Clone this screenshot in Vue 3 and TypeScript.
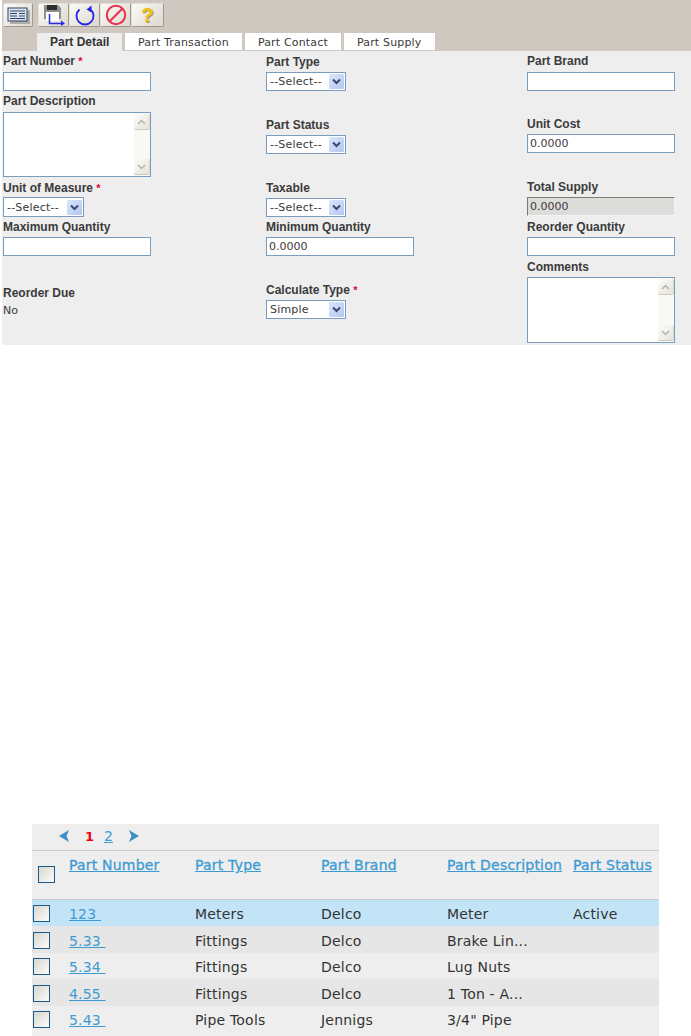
<script setup lang="ts">
interface Row { num: string; type: string; brand: string; desc: string; status: string }
const rows: Row[] = [
  { num: '123', type: 'Meters', brand: 'Delco', desc: 'Meter', status: 'Active' },
  { num: '5.33', type: 'Fittings', brand: 'Delco', desc: 'Brake Lin...', status: '' },
  { num: '5.34', type: 'Fittings', brand: 'Delco', desc: 'Lug Nuts', status: '' },
  { num: '4.55', type: 'Fittings', brand: 'Delco', desc: '1 Ton - A...', status: '' },
  { num: '5.43', type: 'Pipe Tools', brand: 'Jennigs', desc: '3/4" Pipe', status: '' },
]
const headers = ['Part Number', 'Part Type', 'Part Brand', 'Part Description', 'Part Status']
const tabs = ['Part Transaction', 'Part Contact', 'Part Supply']
</script>

<template>
  <div class="page">
    <header class="topbar">
      <div class="toolbar">
        <button class="tool t1" type="button" aria-label="List">
          <svg width="23" height="17" viewBox="0 0 23 17">
            <rect x="3" y="3" width="20" height="14" fill="#777" opacity=".5" />
            <rect x="1" y="1" width="19" height="13" fill="#dbe6f7" stroke="#33415f" />
            <path d="M3 4h15M3 6.500h7M12 6.500h6M3 9h7M12 9h6M3 11.500h15" stroke="#33415f" fill="none" />
          </svg>
        </button>
        <button class="tool t2" type="button" aria-label="Save">
          <svg width="24" height="22" viewBox="0 0 24 22">
            <path d="M2 1h14l3 3v11H2z" fill="#8f8f8f" />
            <rect x="5" y="1" width="10" height="5" fill="#2e2e2e" />
            <rect x="4" y="8" width="13" height="9" fill="#fff" />
            <path d="M7.500 10v9.500H20" fill="none" stroke="#2a2ae0" stroke-width="1.500" />
            <path d="M19 16.500l4 3-4 2.500z" fill="#2a2ae0" />
          </svg>
        </button>
        <button class="tool" type="button" aria-label="Undo">
          <svg width="22" height="22" viewBox="0 0 22 22">
            <path d="M5.500 5.500a8.500 8.500 0 1 0 11 0" fill="none" stroke="#2222e8" stroke-width="1.800" />
            <path d="M17.500 1.500v7l-5-3z" fill="#2222e8" />
          </svg>
        </button>
        <button class="tool" type="button" aria-label="Cancel">
          <svg width="22" height="22" viewBox="0 0 22 22">
            <circle cx="11" cy="11" r="9.200" fill="none" stroke="#e8304f" stroke-width="2" />
            <path d="M5 17L17 5" stroke="#e8304f" stroke-width="2" />
          </svg>
        </button>
        <button class="tool t5" type="button" aria-label="Help">?</button>
      </div>
      <nav class="tabs">
        <span class="tab active">Part Detail</span>
        <span v-for="t in tabs" :key="t" class="tab">{{ t }}</span>
      </nav>
    </header>

    <form class="form">
      <div class="col col1">
        <div class="field g4"><label>Part Number <b class="req">*</b></label><div class="box input"></div></div>
        <div class="field g4 m3"><label>Part Description</label>
          <div class="box area a65">
            <div class="scroll">
              <span class="sbtn"><svg width="9" height="6" viewBox="0 0 9 6"><path d="M1 5l3.500-3.500L8 5" fill="none" stroke="#b5b5ac" stroke-width="1.500" /></svg></span>
              <span class="sbtn"><svg width="9" height="6" viewBox="0 0 9 6"><path d="M1 1l3.500 3.500L8 1" fill="none" stroke="#b5b5ac" stroke-width="1.500" /></svg></span>
            </div>
          </div>
        </div>
        <div class="field m4 g2"><label>Unit of Measure <b class="req">*</b></label>
          <div class="box select s81"><span class="val sel-val">--Select--</span><span class="arrow"><svg width="9" height="7" viewBox="0 0 9 7"><path d="M1 1.500l3.500 3.500L8 1.500" fill="none" stroke="#3c4a70" stroke-width="2" /></svg></span></div>
        </div>
        <div class="field m3"><label>Maximum Quantity</label><div class="box input"></div></div>
        <div class="field m30 g4"><label>Reorder Due</label><div class="plain">No</div></div>
      </div>

      <div class="col col2">
        <div class="field c2top"><label>Part Type</label>
          <div class="box select"><span class="val sel-val">--Select--</span><span class="arrow"><svg width="9" height="7" viewBox="0 0 9 7"><path d="M1 1.500l3.500 3.500L8 1.500" fill="none" stroke="#3c4a70" stroke-width="2" /></svg></span></div>
        </div>
        <div class="field m27"><label>Part Status</label>
          <div class="box select"><span class="val sel-val">--Select--</span><span class="arrow"><svg width="9" height="7" viewBox="0 0 9 7"><path d="M1 1.500l3.500 3.500L8 1.500" fill="none" stroke="#3c4a70" stroke-width="2" /></svg></span></div>
        </div>
        <div class="field m27"><label>Taxable</label>
          <div class="box select"><span class="val sel-val">--Select--</span><span class="arrow"><svg width="9" height="7" viewBox="0 0 9 7"><path d="M1 1.500l3.500 3.500L8 1.500" fill="none" stroke="#3c4a70" stroke-width="2" /></svg></span></div>
        </div>
        <div class="field m3"><label>Minimum Quantity</label><div class="box input"><span class="val">0.0000</span></div></div>
        <div class="field m27"><label>Calculate Type <b class="req">*</b></label>
          <div class="box select"><span class="val sel-val">Simple</span><span class="arrow"><svg width="9" height="7" viewBox="0 0 9 7"><path d="M1 1.500l3.500 3.500L8 1.500" fill="none" stroke="#3c4a70" stroke-width="2" /></svg></span></div>
        </div>
      </div>

      <div class="col col3">
        <div class="field g4"><label>Part Brand</label><div class="box input"></div></div>
        <div class="field m26"><label>Unit Cost</label><div class="box input"><span class="val">0.0000</span></div></div>
        <div class="field m27"><label>Total Supply</label><div class="box input disabled"><span class="val">0.0000</span></div></div>
        <div class="field m4"><label>Reorder Quantity</label><div class="box input"></div></div>
        <div class="field m4"><label>Comments</label>
          <div class="box area">
            <div class="scroll">
              <span class="sbtn"><svg width="9" height="6" viewBox="0 0 9 6"><path d="M1 5l3.500-3.500L8 5" fill="none" stroke="#b5b5ac" stroke-width="1.500" /></svg></span>
              <span class="sbtn"><svg width="9" height="6" viewBox="0 0 9 6"><path d="M1 1l3.500 3.500L8 1" fill="none" stroke="#b5b5ac" stroke-width="1.500" /></svg></span>
            </div>
          </div>
        </div>
      </div>
    </form>

    <section class="grid">
      <div class="pager">
        <svg width="10" height="12" viewBox="0 0 10 12"><path d="M0 6L10 0 7.500 6 10 12z" fill="#3d8fc4" /></svg>
        <span class="cur">1</span>
        <a class="pg">2</a>
        <svg width="10" height="12" viewBox="0 0 10 12"><path d="M10 6L0 0l2.500 6L0 12z" fill="#3d8fc4" /></svg>
      </div>
      <div class="row head">
        <span class="chk-cell head-chk"><input class="chk" type="checkbox" aria-label="Select all" /></span>
        <a v-for="h in headers" :key="h" class="hlink">{{ h }}</a>
      </div>
      <div v-for="(r, i) in rows" :key="r.num" class="row body" :class="{ sel: i === 0, alt: i % 2 === 1 }">
        <span class="chk-cell"><input class="chk" type="checkbox" :aria-label="'Select ' + r.num" /></span>
        <span class="cell"><a class="num">{{ r.num }}&nbsp;</a></span>
        <span class="cell">{{ r.type }}</span>
        <span class="cell">{{ r.brand }}</span>
        <span class="cell">{{ r.desc }}</span>
        <span class="cell">{{ r.status }}</span>
      </div>
    </section>
  </div>
</template>

<style>
html, body { margin: 0; background: #fff; }
</style>

<style scoped>
.page {
  width: 691px;
  height: 1036px;
  overflow: hidden;
  background: #fff;
  font-family: "Liberation Sans", Arial, sans-serif;
  color: #333;
}
.topbar {
  margin-left: 2px;
  height: 51px;
  background: #cfc8c0;
  box-sizing: border-box;
  padding-top: 3px;
}
.toolbar { display: flex; height: 24px; padding-left: 1px; }
.tool {
  width: 31px;
  height: 24px;
  padding: 0;
  box-sizing: border-box;
  display: flex;
  align-items: center;
  justify-content: center;
  border: 1px solid #e4e0d8;
  border-right-color: #9d988e;
  border-bottom-color: #9d988e;
  border-radius: 2px;
  background: linear-gradient(135deg, #fbfaf6, #dcd8cf);
}
.t1 { width: 30px; margin-right: 5px; }
.t5 {
  width: 33px;
  font: bold 21px "Liberation Sans", Arial, sans-serif;
  color: #f2c014;
  text-shadow: 1px 1px 0 #a8955a;
}
.tabs { display: flex; gap: 3px; margin-top: 6px; padding-left: 35px; height: 18px; }
.tab {
  box-sizing: border-box;
  height: 17px;
  padding: 0 13px;
  background: #fff;
  font: 11px/19px "DejaVu Sans", sans-serif;
  letter-spacing: .17px;
  color: #3a3a3a;
  white-space: nowrap;
}
.tab.active {
  height: 18px;
  width: 85px;
  background: #eee;
  font: bold 12px/19px "Liberation Sans", Arial, sans-serif;
  letter-spacing: 0;
  color: #333;
}
.form {
  margin-left: 2px;
  height: 294px;
  background: #eee;
  display: flex;
  box-sizing: border-box;
  padding-top: 3px;
  padding-left: 1px;
}
.col { display: flex; flex-direction: column; width: 148px; }
.col2 { margin-left: 115px; margin-right: 113px; }
.field { display: flex; flex-direction: column; gap: 3px; }
.g4 { gap: 4px; }
.g2 { gap: 2px; }
.m3 { margin-top: 3px; }
.m4 { margin-top: 4px; }
.m26 { margin-top: 26px; }
.m27 { margin-top: 27px; }
.m30 { margin-top: 30px; }
.c2top { margin-top: 1px; }
label {
  font: bold 12px/14px "Liberation Sans", Arial, sans-serif;
  color: #3b3b3b;
  white-space: nowrap;
}
.req { color: #e8003c; font-size: 11px; }
.box {
  box-sizing: border-box;
  border: 1px solid #7a9dbd;
  background: #fff;
  display: flex;
  align-items: center;
}
.input { width: 148px; height: 19px; }
.disabled {
  background: #dcdcda;
  border-color: #7d7a70 #f4f4f4 #f4f4f4 #7d7a70;
}
.select { width: 80px; height: 19px; justify-content: space-between; padding-right: 1px; }
.s81 { width: 81px; height: 20px; }
.val {
  font: 11px/16px "DejaVu Sans", sans-serif;
  color: #3a3a3a;
  padding-left: 2px;
  padding-top: 1px;
  white-space: nowrap;
}
.sel-val { padding-left: 3px; letter-spacing: .2px; }
.arrow {
  width: 15px;
  height: 15px;
  border-radius: 1px;
  background: linear-gradient(135deg, #dbe6fb, #b1c7f2);
  display: flex;
  align-items: center;
  justify-content: center;
}
.area { width: 148px; height: 66px; justify-content: flex-end; align-items: stretch; }
.a65 { height: 65px; }
.scroll {
  width: 16px;
  display: flex;
  flex-direction: column;
  justify-content: space-between;
  background: #f8f8f5;
  padding: 1px 0;
}
.sbtn {
  height: 15px;
  display: flex;
  align-items: center;
  justify-content: center;
  background: linear-gradient(135deg, #fcfcfa, #e6e3da);
  border-bottom: 1px solid #cfcabc;
  border-right: 1px solid #dcd8cc;
  border-radius: 2px;
}
.plain { font: 11px/14px "DejaVu Sans", sans-serif; color: #3a3a3a; }

.grid { margin: 479px 32px 0 32px; background: #eee; height: 212px; }
.pager {
  height: 27px;
  box-sizing: border-box;
  display: flex;
  align-items: center;
  padding: 0 0 2px 27px;
  border-bottom: 1px solid #ccc;
  font: 14px "DejaVu Sans", sans-serif;
}
.cur { color: #f0000f; font-weight: bold; font-size: 13px; margin-left: 16px; width: 19px; }
.pg { color: #3d9bd3; text-decoration: underline; width: 25px; }
.row {
  display: grid;
  grid-template-columns: 37px 126px 126px 126px 126px 86px;
  font: 14px "DejaVu Sans", sans-serif;
  letter-spacing: .2px;
  color: #333;
}
.head { height: 49px; box-sizing: border-box; border-bottom: 1px solid #c9c9c9; padding-top: 5px; }
.hlink {
  color: #3d9bd3;
  text-decoration: underline;
  -webkit-text-stroke: .3px #3d9bd3;
  line-height: 18px;
  white-space: nowrap;
}
.body { height: 26px; align-items: center; background: #eee; }
.alt { background: #e6e6e6; height: 27px; }
.sel { background: #c3e4f7; }
.chk-cell { display: flex; padding: 5px 0 0 1px; align-self: start; }
.alt .chk-cell { padding-top: 6px; }
.head .head-chk { padding-left: 6px; padding-top: 10px; }
.chk {
  appearance: none;
  margin: 0;
  width: 17px;
  height: 17px;
  box-sizing: border-box;
  border: 1px solid #1c5a8c;
  background: linear-gradient(135deg, #d9d6cf, #fbfbf9);
}
.cell { white-space: nowrap; padding-top: 2px; }
.num { color: #3d9bd3; text-decoration: underline; }
</style>
